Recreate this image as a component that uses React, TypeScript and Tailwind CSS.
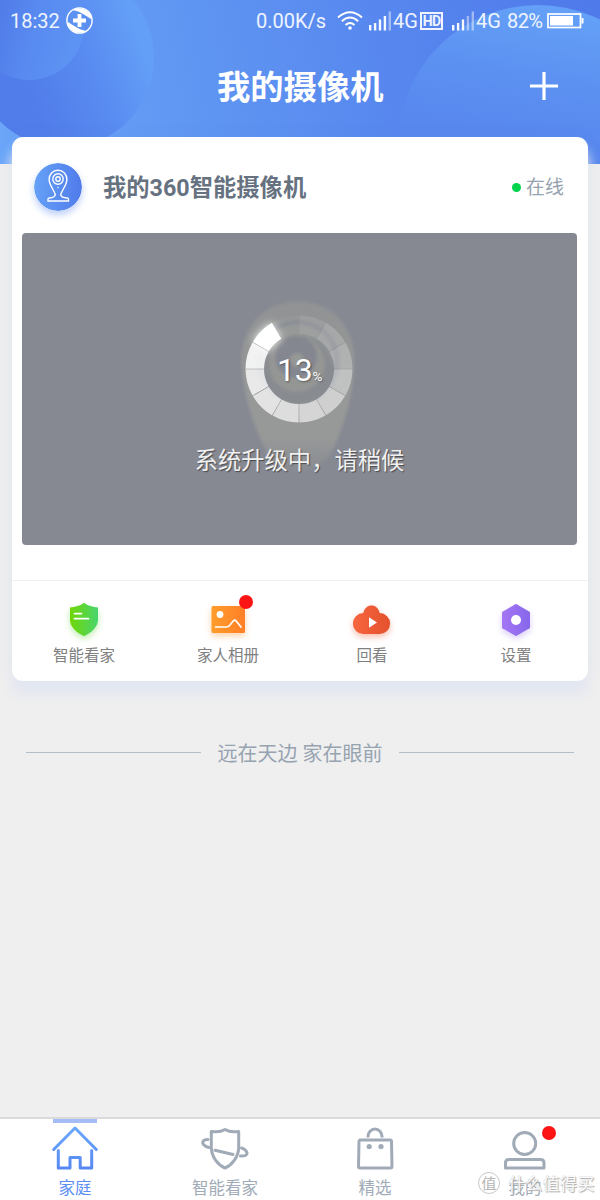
import React from "react";

const FONT = "font-['Roboto','Noto_Sans_CJK_SC',sans-serif]";

function HeaderArt() {
  return (
    <svg className="absolute inset-0" width="600" height="164" viewBox="0 0 600 164">
      <defs>
        <linearGradient id="hdr" gradientUnits="userSpaceOnUse" x1="0" y1="150" x2="600" y2="40">
          <stop offset="0" stopColor="#6ba6f9" />
          <stop offset="0.35" stopColor="#5f95f2" />
          <stop offset="0.7" stopColor="#5685ee" />
          <stop offset="1" stopColor="#4f7aea" />
        </linearGradient>
        <linearGradient id="c1" gradientUnits="userSpaceOnUse" x1="35" y1="105" x2="150" y2="62">
          <stop offset="0" stopColor="#517dea" />
          <stop offset="0.5" stopColor="#588af0" />
          <stop offset="1" stopColor="#639ff7" />
        </linearGradient>
        <linearGradient id="c2" gradientUnits="userSpaceOnUse" x1="0" y1="20" x2="84" y2="40">
          <stop offset="0" stopColor="#517de9" />
          <stop offset="0.4" stopColor="#588af0" />
          <stop offset="1" stopColor="#5e95f3" />
        </linearGradient>
        <linearGradient id="c3" gradientUnits="userSpaceOnUse" x1="555" y1="10" x2="530" y2="145">
          <stop offset="0" stopColor="#64a0f7" />
          <stop offset="0.5" stopColor="#5c91f1" />
          <stop offset="1" stopColor="#5887ee" />
        </linearGradient>
      </defs>
      <rect width="600" height="164" fill="url(#hdr)" />
      <circle cx="64" cy="58" r="90" fill="url(#c1)" />
      <circle cx="29" cy="25" r="55" fill="url(#c2)" />
      <circle cx="538" cy="145" r="140" fill="url(#c3)" />
    </svg>
  );
}

function Signal({ dim }: { dim: number }) {
  const tops = [14, 12, 8.5, 5, 0.5];
  return (
    <svg width="22" height="20" viewBox="0 0 22 20" fill="#fff">
      {tops.map((t, i) => (
        <rect key={i} x={i * 4.9} y={t} width="2.4" height={19.5 - t} opacity={i >= 5 - dim ? 0.45 : 0.95} />
      ))}
    </svg>
  );
}

function StatusBar() {
  return (
    <div className="relative flex h-[41px] items-center text-[20px] leading-[39px] text-white/90">
      <span className="mt-[2px] ml-[10px] w-[56px] whitespace-nowrap">18:32</span>
      <svg width="27" height="28" viewBox="0 0 27 28" fill="none">
        <circle cx="13.5" cy="13.500" r="12.6" stroke="#fff" strokeWidth="1.4" />
        <path d="M6.500 3C13-0.500 22 1.500 25.500 9.500L25 12C20 9 15 4.500 6.500 3Z" fill="#fff" />
        <path d="M20.500 24C14 27.500 5 25.500 1.500 17.500L2 15C7 18 12 22.500 20.500 24Z" fill="#fff" />
        <path d="M13.500 7v13M7 13.500h13" stroke="#fff" strokeWidth="3.800" />
      </svg>
      <span className="mt-[2px] ml-[163px] w-[81px] whitespace-nowrap">0.00K/s</span>
      <svg width="26" height="20" viewBox="0 0 26 20" fill="none" stroke="#fff" strokeWidth="1.900">
        <path d="M1 6.500Q13-4 25 6.500M4.800 10.200Q13 3 21.200 10.200M8.500 14Q13 10 17.500 14" />
        <circle cx="13" cy="17" r="1.800" fill="#fff" stroke="none" />
      </svg>
      <div className="ml-[6px]"><Signal dim={1} /></div>
      <span className="mt-[2px] ml-[2px] w-[27px] whitespace-nowrap">4G</span>
      <span className="flex h-[18px] w-[23px] items-center justify-center border-2 border-white/90 text-[14px] leading-none font-bold tracking-[-0.8px]">HD</span>
      <div className="ml-[9px]"><Signal dim={2} /></div>
      <span className="mt-[2px] ml-[2px] w-[31px] whitespace-nowrap">4G</span>
      <span className="mt-[2px] w-[40px] whitespace-nowrap tracking-[-0.6px]">82%</span>
      <svg className="shrink-0" width="37" height="16" viewBox="0 0 37 16">
        <rect x="1" y="1" width="32.500" height="13.500" fill="none" stroke="#fff" strokeWidth="1.700" />
        <rect x="3" y="3" width="23" height="9.500" fill="#fff" />
        <rect x="34.500" y="5" width="2" height="5.500" fill="#fff" />
      </svg>
    </div>
  );
}

function polar(r: number, deg: number) {
  const a = ((deg - 90) * Math.PI) / 180;
  return `${(80 + r * Math.cos(a)).toFixed(2)} ${(86 + r * Math.sin(a)).toFixed(2)}`;
}

function segment(i: number) {
  const a = i * 30 + 0.4;
  const b = i * 30 + 29.6;
  return `M${polar(53.5, a)}A53.5 53.5 0 0 1 ${polar(53.5, b)}L${polar(35, b)}A35 35 0 0 0 ${polar(35, a)}Z`;
}

const SHADES = [0.1, 0.18, 0.26, 0.4, 0.53, 0.59, 0.67, 0.73, 0.78, 0.87, 1, 0.04];

function UpgradeArt() {
  return (
    <svg width="160" height="200" viewBox="0 0 160 200">
      <defs>
        <filter id="soft" x="-20%" y="-20%" width="140%" height="140%">
          <feGaussianBlur stdDeviation="1.8" />
        </filter>
        <filter id="glow" x="-50%" y="-50%" width="200%" height="200%">
          <feGaussianBlur stdDeviation="4" />
        </filter>
        <linearGradient id="pin" x1="0" y1="0" x2="0" y2="1">
          <stop offset="0" stopColor="#909293" />
          <stop offset="0.5" stopColor="#979998" />
          <stop offset="0.8" stopColor="#979998" />
          <stop offset="1" stopColor="#878a91" />
        </linearGradient>
      </defs>
      <path d="M79 18C46 18 22.500 43 22.500 77 22.500 107 34 140 45 164 52 181 65 189 80 189S108 181 115 164C126 140 135.500 107 135.500 77 135.500 43 112 18 79 18Z" fill="url(#pin)" filter="url(#soft)" />
      <g filter="url(#soft)">
        <circle cx="79" cy="79" r="42" fill="#868990" />
        <circle cx="79" cy="77" r="36" fill="#939595" />
        <circle cx="80" cy="87" r="34" fill="#888b90" />
        <circle cx="78" cy="81" r="28" fill="#949694" />
        <circle cx="77" cy="74" r="21" fill="#84878f" />
        <circle cx="78" cy="77" r="7" fill="#969896" />
      </g>
      <path d={segment(10)} fill="#fff" filter="url(#glow)" opacity="0.9" />
      {SHADES.map((o, i) => (
        <path key={i} d={segment(i)} fill="#fff" opacity={o} />
      ))}
    </svg>
  );
}

function VideoPanel() {
  return (
    <div className="relative ml-[10px] mt-[22px] flex h-[312px] w-[555px] justify-center rounded-[4px] bg-[#868992]">
      <div className="mt-[50px] mr-px h-[200px] w-[160px]"><UpgradeArt /></div>
      <div className="absolute left-[255px] top-[116px] flex items-baseline whitespace-nowrap text-white [text-shadow:1px_1px_2px_#0006]">
        <span className="text-[32px] leading-[42px] tracking-[-0.3px]">13</span>
        <span className="text-[13.5px]">%</span>
      </div>
      <div className="absolute top-[210px] w-full text-center text-[23.3px] leading-[36px] text-[#f0f0f0] [text-shadow:1px_1px_1px_#0007]">系统升级中，请稍候</div>
    </div>
  );
}

function ShieldIcon() {
  return (
    <svg className="drop-shadow-[0_3px_3px_#62d53a66]" width="38" height="38" viewBox="0 0 38 38">
      <defs><linearGradient id="gs"><stop stopColor="#70d606" /><stop offset="1" stopColor="#48d56e" /></linearGradient></defs>
      <path d="M19 1.800C15.500 5 10 6 5 6.500V19C5 26 12 32 19 35.200 26 32 33 26 33 19V6.500C28 6 22.500 5 19 1.800Z" fill="url(#gs)" />
      <path d="M9.500 12.700H16.500M9.500 17.700H23.500" stroke="#fff" strokeWidth="1.700" strokeLinecap="round" />
    </svg>
  );
}

function AlbumIcon() {
  return (
    <div className="relative h-[38px] w-[38px]">
      <svg className="drop-shadow-[0_3px_3px_#ff922e66]" width="38" height="38" viewBox="0 0 38 38">
        <defs><linearGradient id="ga"><stop stopColor="#ff9d2c" /><stop offset="1" stopColor="#ff7f27" /></linearGradient></defs>
        <rect x="2.500" y="5" width="33.500" height="27" rx="1.500" fill="url(#ga)" />
        <circle cx="11" cy="13.500" r="3.400" fill="#fff" />
        <path d="M6.500 26H17.500C19.500 26 20 25 21 24L24.200 20Q25.700 18.400 27.200 20L32 26" stroke="#fff" strokeWidth="1.700" fill="none" strokeLinecap="round" />
      </svg>
      <span className="absolute left-[30px] top-[-6px] h-[13.5px] w-[13.5px] rounded-full bg-[#fc1414]" />
    </div>
  );
}

function CloudIcon() {
  return (
    <svg className="drop-shadow-[0_3px_3px_#f05c3566]" width="38" height="38" viewBox="0 0 38 38">
      <defs><linearGradient id="gc"><stop stopColor="#f7663f" /><stop offset="1" stopColor="#e4512d" /></linearGradient></defs>
      <path d="M10.500 33A10.500 10.500 0 0 1 10.300 12C11.500 7 14.500 4.500 18.500 4.500S25.500 7 26.700 12A10.500 10.500 0 0 1 26.500 33Z" fill="url(#gc)" />
      <path d="M16 16.200V26.800L24 21.500Z" fill="#fff" />
    </svg>
  );
}

function SettingsIcon() {
  return (
    <svg className="drop-shadow-[0_3px_3px_#966cf155]" width="38" height="38" viewBox="0 0 38 38">
      <defs><linearGradient id="gp"><stop stopColor="#a576f4" /><stop offset="1" stopColor="#8767eb" /></linearGradient></defs>
      <path d="M18.400 3.200Q19 2.900 19.600 3.200L32.500 10.700Q33 11 33 11.700V26.300Q33 27 32.500 27.300L19.600 34.800Q19 35.100 18.400 34.800L5.500 27.300Q5 27 5 26.300V11.700Q5 11 5.500 10.700Z" fill="url(#gp)" />
      <circle cx="19" cy="19" r="5" fill="#fff" />
    </svg>
  );
}

function Action({ icon, label }: { icon: React.ReactNode; label: string }) {
  return (
    <div className="flex flex-1 flex-col items-center pt-[20px]">
      {icon}
      <span className="mt-[5px] text-[15.5px] leading-6 text-[#808080]">{label}</span>
    </div>
  );
}

function CameraCard() {
  return (
    <div className="relative -mt-px mx-3 flex h-[544px] flex-col rounded-[11px] bg-white shadow-[0_13px_12px_1px_#e3e7f1,0_0_20px_#5068a00c]">
      <div className="mt-[26px] flex h-[48px] items-center pl-[22px] pr-6">
        <svg className="shrink-0 rounded-full shadow-[0_4px_7px_#5989f266]" width="48" height="48" viewBox="0 0 48 48" fill="none" stroke="#fff" strokeWidth="1.400">
          <defs><linearGradient id="gi" x1="0" y1="0.500" x2="1" y2="0.550"><stop stopColor="#65a1f7" /><stop offset="1" stopColor="#507bea" /></linearGradient></defs>
          <circle cx="24" cy="24" r="24" fill="url(#gi)" stroke="none" />
          <path d="M24 7.300A8.900 8.900 0 0 0 15.100 16.500C15.100 22 20 27 21.300 31.500 21 34.500 18 34.800 15.500 35A1.300 1.300 0 0 0 14 36.300V38H34.500V36.300A1.300 1.300 0 0 0 33 35C30 34.800 27 34.500 26.700 31.500 28 27 32.900 22 32.900 16.500A8.900 8.900 0 0 0 24 7.300Z" />
          <circle cx="24" cy="16" r="5.200" />
          <circle cx="24" cy="16" r="2.200" />
          <circle cx="24" cy="24.500" r="0.700" fill="#fff" stroke="none" />
        </svg>
        <h2 className="ml-[21px] mt-[3px] text-[23.3px] font-bold text-[#66727f]">我的360智能摄像机</h2>
        <span className="ml-auto mr-[5px] h-[9px] w-[9px] rounded-full bg-[#00d44c]" />
        <span className="mt-[3px] text-[19px] text-[#96a2ae]">在线</span>
      </div>
      <VideoPanel />
      <div className="mt-[35px] flex h-[100px] border-t border-[#f0f0f2]">
        <Action icon={<ShieldIcon />} label="智能看家" />
        <Action icon={<AlbumIcon />} label="家人相册" />
        <Action icon={<CloudIcon />} label="回看" />
        <Action icon={<SettingsIcon />} label="设置" />
      </div>
    </div>
  );
}

function Tab({ icon, label, active }: { icon: React.ReactNode; label: string; active?: boolean }) {
  return (
    <div className={`flex w-[150px] flex-col items-center ${active ? "text-[#5b8ff5]" : "text-[#a0abb7]"}`}>
      <div className={`h-[4px] w-[44px] shrink-0 ${active ? "bg-[#a6bcf7]" : ""}`} />
      <div className="h-[50px] shrink-0">{icon}</div>
      <span className="text-[16.5px] leading-[31px]">{label}</span>
    </div>
  );
}

function TabBar() {
  return (
    <nav className="relative mt-auto flex h-[83px] border-t-2 border-[#dadada] bg-white">
      <Tab active label="家庭" icon={
        <svg width="50" height="50" viewBox="0 0 50 50" fill="none" stroke="url(#gh)" strokeWidth="3" strokeLinecap="round" strokeLinejoin="round">
          <defs><linearGradient id="gh" gradientUnits="userSpaceOnUse" x1="0" y1="5" x2="0" y2="46"><stop stopColor="#69a8fb" /><stop offset="1" stopColor="#5788f2" /></linearGradient></defs>
          <path d="M3.700 26.500L25 5L46.300 26.500M8.300 27.500V45H20V34.500H30.200V45H41.700V27.500" />
        </svg>
      } />
      <Tab label="智能看家" icon={
        <svg width="50" height="50" viewBox="0 0 50 50" fill="none" stroke="currentColor" strokeWidth="3" strokeLinecap="round" strokeLinejoin="round">
          <path d="M25 6.500C21 9 16 9.200 11.300 8.500V24C11.300 34 18 42 25 45 32 42 38.700 34 38.700 24V8.500C34 9.200 29 9 25 6.500Z" />
          <path d="M8 16.500C3 16.500 1.800 19 3.500 21.500 4.700 23 7 24 9 24.500M15 27.300L33 31.500M41.500 25C46 26.500 48 29.500 46.500 31.500 45.500 33 43 33.200 40.500 33" />
        </svg>
      } />
      <Tab label="精选" icon={
        <svg width="50" height="50" viewBox="0 0 50 50" fill="none" stroke="currentColor" strokeWidth="3" strokeLinejoin="round">
          <path d="M10 17H40A1.500 1.500 0 0 1 41.500 18.500L42 43.500A1.500 1.500 0 0 1 40.500 45H10A1.500 1.500 0 0 1 8.500 43.500L9 18.500A1.500 1.500 0 0 1 10 17ZM18 14.500V13.500A7 7.500 0 0 1 32 13.500V14.500" />
          <circle cx="19.200" cy="23.500" r="2.600" fill="currentColor" stroke="none" />
          <circle cx="31" cy="23.500" r="2.600" fill="currentColor" stroke="none" />
        </svg>
      } />
      <Tab label="我的" icon={
        <div className="relative">
          <svg width="50" height="50" viewBox="0 0 50 50" fill="none" stroke="currentColor" strokeWidth="3" strokeLinejoin="round">
            <circle cx="24.700" cy="20.500" r="11" />
            <path d="M5.500 45V40Q5.500 36.500 9 36.500H40.500Q44 36.500 44 40V45Z" />
          </svg>
          <span className="absolute left-[42px] top-[3px] h-[13.5px] w-[13.5px] rounded-full bg-[#fc1414]" />
        </div>
      } />
      <div className="absolute left-[478px] top-[53px] flex h-[22px] items-center whitespace-nowrap font-['Noto_Sans_CJK_SC',sans-serif] text-[17.3px] leading-[22px] text-white/95 [text-shadow:0_0_1px_#bbb,1px_1px_1px_#aaa]">
        <span className="flex h-[22px] w-[22px] items-center justify-center rounded-full border border-[#c8c8c8] text-[15px] text-[#b5b5b5] [text-shadow:none]">值</span>
        <span className="ml-[8px]">什么值得买</span>
      </div>
    </nav>
  );
}

export default function App() {
  return (
    <div className={`relative flex h-[1200px] w-[600px] flex-col overflow-hidden bg-[#efefef] ${FONT}`}>
      <HeaderArt />
      <StatusBar />
      <header className="relative flex h-[97px] items-center pb-[7px]">
        <h1 className="ml-[217px] mt-[4px] w-[313px] text-[33.3px] font-bold text-white">我的摄像机</h1>
        <svg width="28" height="28" viewBox="0 0 28 28" stroke="#fff" strokeWidth="3.200"><path d="M14 0V28M0 14H28" /></svg>
      </header>
      <CameraCard />
      <div className="mt-[56px] flex h-[30px] items-center px-[26px]">
        <div className="h-px flex-1 bg-[#b5bfca]" />
        <span className="mx-[17px] pt-[4px] text-[20px] leading-[30px] text-[#96a3b0]">远在天边 家在眼前</span>
        <div className="h-px flex-1 bg-[#b5bfca]" />
      </div>
      <TabBar />
    </div>
  );
}
